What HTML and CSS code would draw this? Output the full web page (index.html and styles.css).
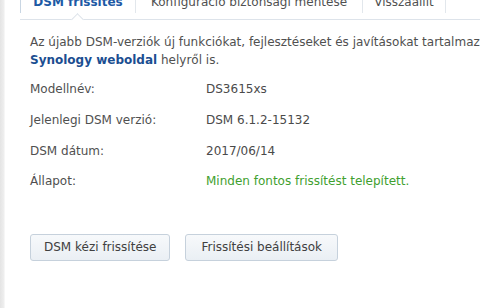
FILE: index.html
```html
<!doctype html>
<html lang="hu">
    <head>
        <meta charset="UTF-8" />
        <meta name="viewport" content="width=device-width, initial-scale=1.0" />
        <title>DSM frissítés</title>
        <link rel="stylesheet" href="styles.css">
    </head>
    <body>
        <div class="frame">
            <div class="side"></div>
            <div class="panel">
                <!-- Tabs -->
                <div class="tabs">
                    <div class="tab active">DSM frissítés</div>
                    <div class="tab wide">Konfiguráció biztonsági mentése</div>
                    <div class="tab narrow">Visszaállít</div>
                </div>

                <div class="content">
                    <p class="intro">
                        Az újabb DSM-verziók új funkciókat, fejlesztéseket és javításokat tartalmaznak.<br>
                        <a href="#">Synology weboldal</a> helyről is.
                    </p>

                    <div class="info">
                        <div class="row"><span class="label">Modellnév:</span><span class="value">DS3615xs</span></div>
                        <div class="row"><span class="label">Jelenlegi DSM verzió:</span><span class="value">DSM 6.1.2-15132</span></div>
                        <div class="row"><span class="label">DSM dátum:</span><span class="value">2017/06/14</span></div>
                        <div class="row"><span class="label">Állapot:</span><span class="value ok">Minden fontos frissítést telepített.</span></div>
                    </div>

                    <div class="actions">
                        <button class="btn">DSM kézi frissítése</button>
                        <button class="btn wide">Frissítési beállítások</button>
                    </div>
                </div>
            </div>
        </div>
    </body>
</html>
```

FILE: styles.css
```css
body {
    margin: 0;
    background-color: #fff;
    font-family: "DejaVu Sans", Verdana, sans-serif;
    font-size: 11px;
    color: #505050;
    overflow: hidden;
}
.frame {
    display: flex;
    height: 308px;
}
.side {
    width: 4px;
    background: linear-gradient(to right, #e4e4e4, #efefef);
    border-right: 1px solid #f6f6f6;
}
.panel {
    flex: 1;
    min-width: 0;
    overflow: hidden;
}
.tabs {
    display: flex;
    align-items: flex-start;
    margin: -9px 0 0 15px;
    height: 28px;
    border-bottom: 1px solid #dde3ea;
}
.tab {
    position: relative;
    height: 22px;
    line-height: 22px;
    width: 114px;
    text-align: center;
    white-space: nowrap;
    font-size: 12px;
    color: #505050;
    border-right: 1px solid #e2e7ec;
}
.tab.active {
    border-left: 1px solid #c9d6e3;
    color: #1d5aa5;
    font-weight: bold;
}
.tab.active::after {
    content: "";
    position: absolute;
    left: 52px;
    top: 24px;
    width: 8px;
    height: 8px;
    background: #fff;
    border-top: 1px solid #dde3ea;
    border-left: 1px solid #dde3ea;
    transform: rotate(45deg);
}
.tab.wide {
    width: 226px;
}
.tab.narrow {
    width: 82px;
}
.content {
    padding: 13px 0 0 25px;
}
.intro {
    margin: 0;
    line-height: 18px;
    white-space: nowrap;
    font-size: 12px;
}
.intro a {
    color: #1b4e91;
    font-weight: bold;
    text-decoration: none;
}
.info {
    margin-top: 5px;
}
.row {
    display: flex;
    height: 30.7px;
    align-items: center;
    font-size: 12px;
}
.label {
    width: 176px;
}
.value {
    color: #4a4a4a;
}
.value.ok {
    color: #3fa02f;
}
.actions {
    display: flex;
    gap: 15px;
    margin-top: 37px;
}
.btn {
    height: 27px;
    padding: 0 13px;
    font-family: inherit;
    font-size: 12px;
    color: #404040;
    background: linear-gradient(#f7f9fb, #eaeff4);
    border: 1px solid #c6d1dc;
    border-radius: 3px;
    cursor: pointer;
}
.btn.wide {
    padding: 0 15px;
}
```
